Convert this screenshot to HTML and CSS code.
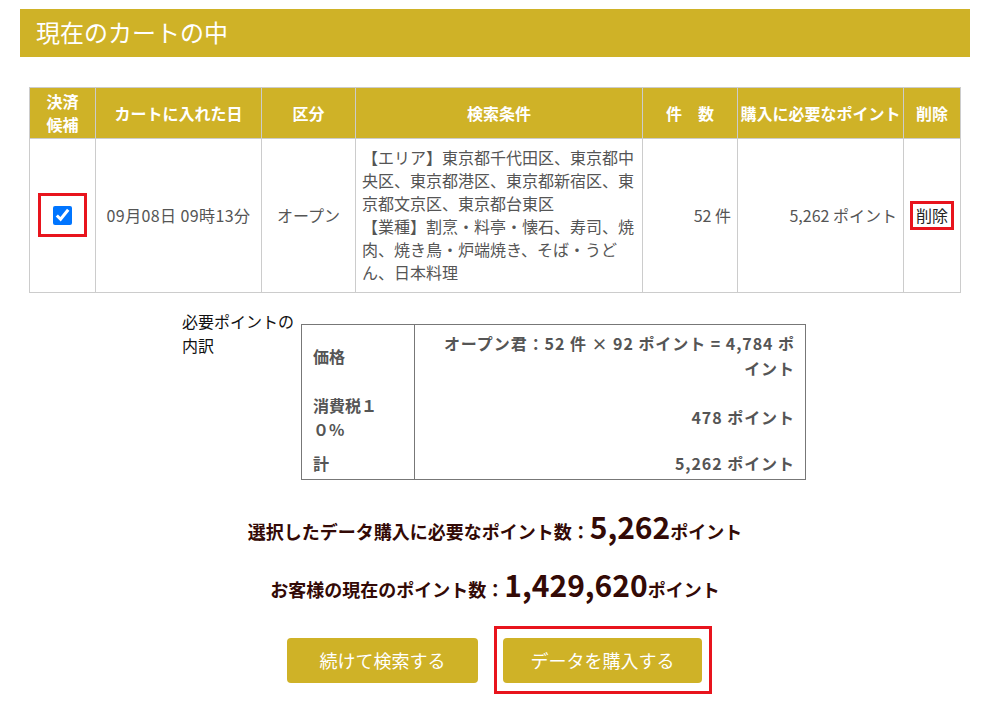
FILE: index.html
```html
<!DOCTYPE html>
<html lang="ja">
<head>
  <meta charset="UTF-8">
  <title>現在のカートの中</title>
  <link rel="stylesheet" href="styles.css">
</head>
<body>

  <div class="page">
    <h2 class="cart-title">現在のカートの中</h2>

    <table class="cart-table">
      <colgroup>
        <col class="c-check">
        <col class="c-date">
        <col class="c-kind">
        <col class="c-cond">
        <col class="c-count">
        <col class="c-point">
        <col class="c-del">
      </colgroup>
      <thead>
        <tr>
          <th>決済<br>候補</th>
          <th>カートに入れた日</th>
          <th>区分</th>
          <th>検索条件</th>
          <th>件　数</th>
          <th>購入に必要なポイント</th>
          <th>削除</th>
        </tr>
      </thead>
      <tbody>
        <tr>
          <td class="center">
            <span class="mark-box"><input type="checkbox" checked></span>
          </td>
          <td class="center date">09月08日 09時13分</td>
          <td class="center">オープン</td>
          <td class="cond">【エリア】東京都千代田区、東京都中央区、東京都港区、東京都新宿区、東京都文京区、東京都台東区<br>【業種】割烹・料亭・懐石、寿司、焼肉、焼き鳥・炉端焼き、そば・うどん、日本料理</td>
          <td class="right">52 件</td>
          <td class="right">5,262 ポイント</td>
          <td class="center"><a class="del-link" href="#">削除</a></td>
        </tr>
      </tbody>
    </table>

    <div class="breakdown">
      <p class="breakdown-label">必要ポイントの<br>内訳</p>
      <table class="breakdown-table">
        <tr class="row-price">
          <th>価格</th>
          <td>オープン君：52 件 × 92 ポイント = 4,784 ポイント</td>
        </tr>
        <tr class="row-tax">
          <th>消費税１０%</th>
          <td>478 ポイント</td>
        </tr>
        <tr class="row-total">
          <th>計</th>
          <td>5,262 ポイント</td>
        </tr>
      </table>
    </div>

    <p class="total need">選択したデータ購入に必要なポイント数：<span class="num">5,262</span>ポイント</p>
    <p class="total have">お客様の現在のポイント数：<span class="num">1,429,620</span>ポイント</p>

    <div class="actions">
      <a class="btn btn-search" href="#">続けて検索する</a>
      <span class="mark-box mark-btn"><a class="btn btn-buy" href="#">データを購入する</a></span>
    </div>
  </div>

</body>
</html>
```

FILE: styles.css
```css
body {
  margin: 0;
  padding: 9px 24px 0 20px;
  font-family: "Noto Sans CJK JP", "Noto Sans", sans-serif;
  color: #555;
  background: #fff;
}

.cart-title {
  margin: 0;
  height: 48px;
  line-height: 46px;
  padding-left: 16px;
  background-color: #cfb227;
  color: #fff;
  font-size: 24px;
  font-weight: normal;
}

/* cart table */
.cart-table {
  width: 931px;
  margin: 30px auto 0;
  border-collapse: collapse;
  table-layout: fixed;
  font-size: 16px;
}

.c-check { width: 66px; }
.c-date { width: 166px; }
.c-kind { width: 94px; }
.c-cond { width: 287px; }
.c-count { width: 95px; }
.c-point { width: 166px; }
.c-del { width: 57px; }

.cart-table th,
.cart-table td {
  border: 1px solid #ccc;
}

.cart-table th {
  background-color: #cfb227;
  color: #fff;
  font-weight: bold;
  line-height: 23px;
  height: 50px;
  padding: 0 2px;
  white-space: nowrap;
}

.cart-table td {
  line-height: 23px;
  padding: 7px 6px 8px;
}

.cart-table .center { text-align: center; padding-left: 2px; padding-right: 2px; }
.cart-table .right { text-align: right; }
.cart-table .cond { padding-left: 6px; padding-right: 6px; }
.cart-table .date { letter-spacing: 0.4px; }

.mark-box {
  display: inline-flex;
  align-items: center;
  justify-content: center;
  border: 3px solid #e8141d;
  width: 43px;
  height: 38px;
  vertical-align: middle;
}

.mark-box input {
  width: 19px;
  height: 19px;
  margin: 0;
  accent-color: #0075ff;
}

.del-link {
  display: inline-block;
  border: 3px solid #e8141d;
  padding: 0 3px;
  line-height: 23px;
  color: #222;
  text-decoration: none;
}

/* breakdown */
.breakdown {
  display: flex;
  justify-content: center;
  align-items: flex-start;
  margin-top: 16px;
  padding-right: 2px;
}

.breakdown-label {
  margin: 0;
  width: 119px;
  font-size: 16px;
  line-height: 24px;
  color: #111;
}

.breakdown-table {
  width: 505px;
  margin-top: 15px;
  border-collapse: collapse;
  font-size: 16px;
  font-weight: bold;
  line-height: 25px;
}

.breakdown-table th,
.breakdown-table td {
  border-left: 1px solid #777;
  border-right: 1px solid #777;
  padding-top: 0;
  padding-bottom: 0;
  vertical-align: middle;
}

.breakdown-table tr:first-child th,
.breakdown-table tr:first-child td { border-top: 1px solid #777; }
.breakdown-table tr:last-child th,
.breakdown-table tr:last-child td { border-bottom: 1px solid #777; }

.breakdown-table th {
  width: 90px;
  text-align: left;
  padding-left: 11px;
  padding-right: 11px;
  line-height: 24px;
}

.breakdown-table td {
  text-align: right;
  padding-left: 24px;
  padding-right: 10px;
  letter-spacing: 0.95px;
}

.row-price { height: 62px; }
.row-tax { height: 61px; }
.row-total { height: 32px; }

/* totals */
.total {
  margin: 0;
  text-align: center;
  color: #330a06;
  font-size: 18px;
  font-weight: bold;
  line-height: 40px;
}

.total .num {
  font-size: 30px;
}

.need { margin-top: 26px; }
.have { margin-top: 13px; }

/* buttons */
.actions {
  display: flex;
  justify-content: center;
  align-items: center;
  gap: 16px;
  margin-top: 17px;
  padding-left: 9px;
}

.btn {
  display: inline-block;
  height: 45px;
  line-height: 45px;
  border-radius: 4px;
  background-color: #cfb227;
  color: #fff;
  font-size: 18px;
  text-align: center;
  text-decoration: none;
}

.btn-search { width: 191px; }
.btn-buy { width: 199px; }

.mark-btn {
  width: auto;
  height: auto;
  padding: 9px 7px 8px 6px;
}
```
